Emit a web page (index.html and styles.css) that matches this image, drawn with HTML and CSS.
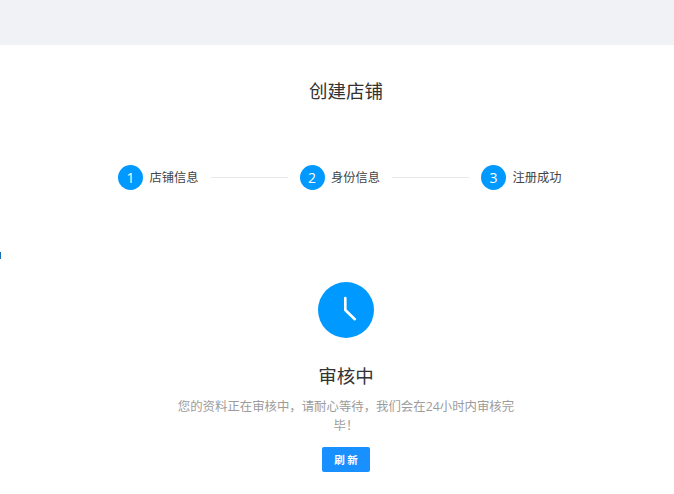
FILE: index.html
```html
<!DOCTYPE html>
<html lang="zh-CN">
<head>
<meta charset="utf-8">
<title>创建店铺</title>
<link rel="stylesheet" href="styles.css">
</head>
<body>
<header class="topbar"></header>
<span class="edge-mark"></span>
<main class="main">
  <h1 class="title">创建店铺</h1>
  <ol class="steps">
    <li class="step"><span class="step-num">1</span><span class="step-label">店铺信息</span></li>
    <li class="step-line"></li>
    <li class="step"><span class="step-num">2</span><span class="step-label">身份信息</span></li>
    <li class="step-line"></li>
    <li class="step"><span class="step-num">3</span><span class="step-label">注册成功</span></li>
  </ol>
  <section class="status">
    <svg class="clock" width="56" height="56" viewBox="0 0 56 56" aria-hidden="true">
      <circle cx="28" cy="28" r="28" fill="#0099ff"/>
      <path d="M27.3 16V28L36.8 37.2" fill="none" stroke="#fff" stroke-width="2.6" stroke-linecap="round" stroke-linejoin="round"/>
    </svg>
    <h2 class="status-title">审核中</h2>
    <p class="status-text">您的资料正在审核中，请耐心等待，我们会在24小时内审核完毕！</p>
    <button class="refresh" type="button">刷 新</button>
  </section>
</main>
</body>
</html>
```

FILE: styles.css
```css
* { box-sizing: border-box; }
html, body { margin: 0; padding: 0; }
body {
  position: relative;
  height: 494px;
  overflow: hidden;
  background: #fff;
  font-family: "Open Sans", "Noto Sans CJK SC", "Microsoft YaHei", sans-serif;
}
.topbar { height: 45px; background: #f0f2f5; }
.edge-mark {
  position: absolute;
  left: 0;
  top: 252px;
  width: 1px;
  height: 7px;
  background: #1a6fb5;
}
.main {
  display: flex;
  flex-direction: column;
  align-items: center;
  padding-left: 18px;
}
.title {
  margin: 32px 0 0;
  font-size: 18.5px;
  font-weight: 400;
  line-height: 28px;
  color: #333;
}
.steps {
  display: flex;
  align-items: center;
  align-self: flex-start;
  margin: 60px 0 0 100px;
  padding: 0;
  list-style: none;
}
.step { display: flex; align-items: center; gap: 6.5px; }
.step-num {
  width: 25px;
  height: 25px;
  border-radius: 50%;
  background: #0099ff;
  color: #fff;
  font-size: 14px;
  line-height: 25px;
  text-align: center;
}
.step-label { font-size: 12.25px; color: #444; line-height: 20px; }
.step-line {
  width: 77px;
  height: 1px;
  margin: 0 12px;
  background: #e8e8e8;
}
.status {
  display: flex;
  flex-direction: column;
  align-items: center;
  margin-top: 92px;
  width: 340px;
}
.clock { display: block; }
.status-title {
  margin: 23px 0 0;
  font-size: 18.5px;
  font-weight: 400;
  line-height: 30px;
  color: #333;
}
.status-text {
  margin: 6px 0 0;
  font-size: 12.4px;
  line-height: 19px;
  color: #9c9c9c;
  text-align: center;
}
.refresh {
  width: 48px;
  height: 25px;
  margin-top: 12px;
  border: 0;
  border-radius: 2px;
  background: #1890ff;
  color: #fff;
  font-family: inherit;
  font-size: 10.5px;
  font-weight: 700;
  padding: 0;
}
```
